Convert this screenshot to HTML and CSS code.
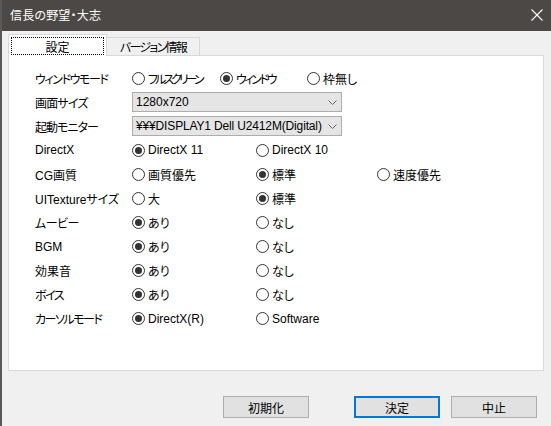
FILE: index.html
```html
<!DOCTYPE html>
<html lang="ja">
<head>
<meta charset="utf-8">
<title>信長の野望・大志</title>
<link rel="stylesheet" href="styles.css">
</head>
<body>
<div class="window">
  <div class="titlebar">
    <span class="title">信長の野望・大志</span>
    <svg class="close" width="12" height="12" viewBox="0 0 12 12"><path d="M0.5 0.5 L11.5 11.5 M11.5 0.5 L0.5 11.5" stroke="#fff" stroke-width="1.1" fill="none"/></svg>
  </div>
  <div class="tabs">
    <div class="tab active"><span class="focus">設定</span></div>
    <div class="tab"><span class="ls-17">バージョン情報</span></div>
  </div>
  <div class="panel">
    <div class="row">
      <div class="label ls-14">ウィンドウモード</div>
      <div class="opt w88"><span class="radio"></span><span class="ls-3">フルスクリーン</span></div>
      <div class="opt w87"><span class="radio on"></span><span class="ls-24">ウィンドウ</span></div>
      <div class="opt"><span class="radio"></span>枠無し</div>
    </div>
    <div class="row">
      <div class="label ls-08">画面サイズ</div>
      <div class="select"><span>1280x720</span><svg width="9" height="5" viewBox="0 0 9 5"><path d="M0.5 0.5 L4.5 4.5 L8.5 0.5" stroke="#666" fill="none"/></svg></div>
    </div>
    <div class="row">
      <div class="label ls-1">起動モニター</div>
      <div class="select"><span class="ls-02">¥¥¥DISPLAY1 Dell U2412M(Digital)</span><svg width="9" height="5" viewBox="0 0 9 5"><path d="M0.5 0.5 L4.5 4.5 L8.5 0.5" stroke="#666" fill="none"/></svg></div>
    </div>
    <div class="row">
      <div class="label">DirectX</div>
      <div class="opt w124"><span class="radio on"></span>DirectX 11</div>
      <div class="opt"><span class="radio"></span>DirectX 10</div>
    </div>
    <div class="row">
      <div class="label">CG画質</div>
      <div class="opt w124"><span class="radio"></span>画質優先</div>
      <div class="opt w121"><span class="radio on"></span>標準</div>
      <div class="opt"><span class="radio"></span>速度優先</div>
    </div>
    <div class="row">
      <div class="label">UITextureサイズ</div>
      <div class="opt w124"><span class="radio"></span>大</div>
      <div class="opt"><span class="radio on"></span>標準</div>
    </div>
    <div class="row">
      <div class="label ls-05">ムービー</div>
      <div class="opt w124"><span class="radio on"></span>あり</div>
      <div class="opt"><span class="radio"></span>なし</div>
    </div>
    <div class="row">
      <div class="label">BGM</div>
      <div class="opt w124"><span class="radio on"></span>あり</div>
      <div class="opt"><span class="radio"></span>なし</div>
    </div>
    <div class="row">
      <div class="label">効果音</div>
      <div class="opt w124"><span class="radio on"></span>あり</div>
      <div class="opt"><span class="radio"></span>なし</div>
    </div>
    <div class="row">
      <div class="label ls-15">ボイス</div>
      <div class="opt w124"><span class="radio on"></span>あり</div>
      <div class="opt"><span class="radio"></span>なし</div>
    </div>
    <div class="row">
      <div class="label ls-15">カーソルモード</div>
      <div class="opt w124"><span class="radio on"></span>DirectX(R)</div>
      <div class="opt"><span class="radio"></span>Software</div>
    </div>
  </div>
  <div class="footer">
    <button class="btn">初期化</button>
    <button class="btn default">決定</button>
    <button class="btn">中止</button>
  </div>
</div>
</body>
</html>
```
FILE: styles.css
```css
html, body {
  margin: 0;
  padding: 0;
}
body {
  width: 551px;
  height: 426px;
  overflow: hidden;
  background: #f0f0f0;
  font-family: "Liberation Sans", "Noto Sans CJK JP", sans-serif;
  font-size: 12px;
  color: #000;
  font-feature-settings: "palt";
}
.window {
  height: 426px;
  border-left: 2px solid #5b5956;
  box-sizing: border-box;
}
.titlebar {
  height: 31px;
  background: #4b4845;
  display: flex;
  align-items: center;
  justify-content: space-between;
  padding: 0 8px 0 8px;
  color: #fff;
}
.title {
  font-family: "Noto Sans CJK JP", sans-serif;
  font-size: 12px;
  letter-spacing: 0.2px;
  margin-top: -2px;
}
.close {
  margin-top: -1px;
}
.tabs {
  display: flex;
  align-items: flex-end;
  margin-top: 3px;
  padding-left: 6px;
  height: 21px;
  position: relative;
  z-index: 1;
}
.tab {
  box-sizing: border-box;
  height: 18px;
  width: 93px;
  border: 1px solid #d9d9d9;
  border-bottom: none;
  border-left: none;
  background: #f0f0f0;
  display: flex;
  align-items: center;
  justify-content: center;
  font-family: "Noto Sans CJK JP", sans-serif;
}
.tab.active {
  width: 99px;
  height: 22px;
  border-left: 1px solid #d9d9d9;
  background: #fff;
  margin-bottom: -1px;
  padding: 2px 2px 1px 2px;
}
.focus {
  flex: 1;
  align-self: stretch;
  border: 1px dotted #000;
  display: flex;
  align-items: center;
  justify-content: center;
}
.panel {
  margin-left: 6px;
  width: 536px;
  height: 316px;
  box-sizing: border-box;
  border: 1px solid #d9d9d9;
  background: #fff;
  padding: 10px 0 0 26px;
}
.row {
  height: 24.1px;
  display: flex;
  align-items: center;
}
.label {
  width: 97px;
  flex: none;
  white-space: nowrap;
}
.opt {
  display: flex;
  align-items: center;
  white-space: nowrap;
  flex: none;
}
.w88 { width: 88px; }
.w87 { width: 87px; }
.w124 { width: 124px; }
.w121 { width: 121px; }
.ls-02 { letter-spacing: -0.15px; }
.ls-05 { letter-spacing: -0.5px; }
.ls-08 { letter-spacing: -0.8px; }
.ls-1 { letter-spacing: -1px; }
.ls-14 { letter-spacing: -1.4px; }
.ls-15 { letter-spacing: -1.5px; }
.ls-17 { letter-spacing: -1.7px; }
.ls-24 { letter-spacing: -2.4px; }
.ls-3 { letter-spacing: -3px; }
.radio {
  width: 13px;
  height: 13px;
  box-sizing: border-box;
  border: 1px solid #333;
  border-radius: 50%;
  background: #fff;
  margin-right: 3px;
  display: flex;
  align-items: center;
  justify-content: center;
  flex: none;
}
.radio.on::after {
  content: "";
  width: 7px;
  height: 7px;
  border-radius: 50%;
  background: #333;
}
.select {
  width: 210px;
  height: 20px;
  box-sizing: border-box;
  border: 1px solid #adadad;
  background: #e5e5e5;
  display: flex;
  align-items: center;
  justify-content: space-between;
  padding: 0 4px 0 3px;
}
.footer {
  display: flex;
  margin-top: 25px;
  padding-left: 221px;
}
.btn {
  width: 86px;
  height: 22px;
  box-sizing: border-box;
  border: 1px solid #adadad;
  background: #e1e1e1;
  font-family: "Noto Sans CJK JP", sans-serif;
  font-size: 12px;
  color: #000;
  padding: 0;
  margin: 0;
}
.btn.default {
  border: 2px solid #0078d7;
  margin-left: 45px;
}
.btn.default + .btn {
  margin-left: 11px;
}
```
